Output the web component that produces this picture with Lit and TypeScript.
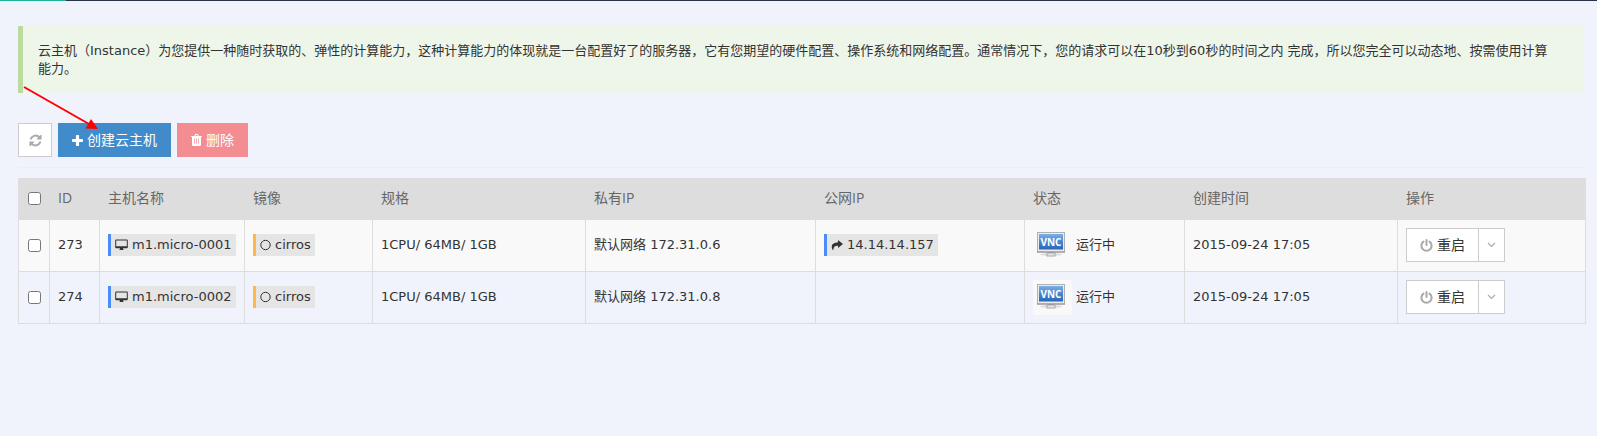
import { LitElement, html, css, svg, nothing } from "lit";
import { customElement, state } from "lit/decorators.js";

interface Instance {
  id: number;
  name: string;
  image: string;
  flavor: string;
  privateIp: string;
  publicIp: string;
  status: string;
  created: string;
}

const INSTANCES: Instance[] = [
  {
    id: 273,
    name: "m1.micro-0001",
    image: "cirros",
    flavor: "1CPU/ 64MB/ 1GB",
    privateIp: "默认网络 172.31.0.6",
    publicIp: "14.14.14.157",
    status: "运行中",
    created: "2015-09-24 17:05",
  },
  {
    id: 274,
    name: "m1.micro-0002",
    image: "cirros",
    flavor: "1CPU/ 64MB/ 1GB",
    privateIp: "默认网络 172.31.0.8",
    publicIp: "",
    status: "运行中",
    created: "2015-09-24 17:05",
  },
];

const icon = (cls: string, w: number, h: number, body: unknown) => html`
  <svg class="icon ${cls}" width=${w} height=${h} viewBox="0 0 ${w} ${h}" aria-hidden="true">${body}</svg>`;

const refreshIcon = icon("muted", 13, 13, svg`
  <path d="M.8 5.3A6 6 0 0 1 10.600 2.100L11.700 1Q12.500.5 12.600 1.300V5.100Q12.600 5.500 12.200 5.500H8.400Q7.600 5.300 8.100 4.600L9.200 3.500A4 4 0 0 0 2.900 5.100Q2.800 5.500 2.500 5.500H1Q.7 5.500.8 5.300Z"/>
  <path d="M12.200 7.700A6 6 0 0 1 2.400 10.900L1.300 12Q.5 12.500.4 11.700V7.900Q.4 7.500.8 7.500H4.600Q5.400 7.700 4.900 8.400L3.800 9.500A4 4 0 0 0 10.100 7.900Q10.200 7.500 10.500 7.500H12Q12.300 7.500 12.200 7.700Z"/>`);

const plusIcon = icon("", 11, 11, svg`
  <path d="M4.700 0h1.600q.8 0 .8.8v3.100h3.100q.8 0 .8.8v1.600q0 .8-.8.8H7.100v3.100q0 .8-.8.8H4.700q-.8 0-.8-.8V7.100H.8Q0 7.100 0 6.300V4.700q0-.8.8-.8h3.100V.8q0-.8.8-.8z"/>`);

const trashIcon = icon("", 11, 12, svg`
  <path fill-rule="evenodd" d="M3.300 2 3.900.6Q4.100 0 4.700 0h1.600q.6 0 .8.6L7.700 2H10.600q.4 0 .4.4v.6h-1v7.500q0 1.500-1.300 1.500H2.300Q1 12 1 10.500V3H0v-.6Q0 2 .4 2zM4.400 2h2.200L6.300 1H4.700zM3 4.500v5h.7v-5zM5.150 4.500v5h.7v-5zM7.300 4.500v5H8v-5z"/>`);

const desktopIcon = icon("", 13, 12, svg`
  <path fill-rule="evenodd" d="M1.200.5h10.600q1 0 1 1v6.800q0 1-1 1H8q0 .7.5 1.100.2.600-.3.600H4.800q-.5 0-.3-.6.5-.4.5-1.100H1.200q-1 0-1-1V1.500q0-1 1-1zM1.200 1.500v5.800h10.600V1.500z"/>`);

const circleIcon = icon("", 11, 12, svg`
  <circle cx="5.500" cy="6" r="4.700" fill="none" stroke="currentColor"/>`);

const shareIcon = icon("", 12, 12, svg`
  <path d="M7 1 12 5 7 9V6.800Q2.500 6.500 2.300 11H1.600Q0 7.500 1.200 5.600 2.800 3.300 7 3.200Z"/>`);

const powerIcon = icon("muted", 13, 13, svg`
  <path d="M3.500 2.600A5.100 5.100 0 1 0 9.500 2.600M6.500 1V6" fill="none" stroke="currentColor" stroke-width="2" stroke-linecap="round"/>`);

const chevronIcon = icon("muted", 9, 6, svg`
  <path d="M1 1 4.500 4.500 8 1" fill="none" stroke="currentColor" stroke-width="1.200"/>`);

const vncIcon = html`
  <svg class="vnc" width="39" height="35" viewBox="0 0 39 35" aria-hidden="true">
    <defs>
      <linearGradient id="screen" x1="0" y1="0" x2="0" y2="1">
        <stop offset="0" stop-color="#7ab0e6"/>
        <stop offset=".5" stop-color="#4a86d0"/>
        <stop offset="1" stop-color="#2a66b8"/>
      </linearGradient>
    </defs>
    <ellipse cx="18" cy="26.500" rx="11" ry="1.500" fill="#dcdcdc"/>
    <path d="M14.500 23h7v2h1v3.500h-9V25h1z" fill="#a8a8a8"/>
    <path d="M14.500 25.500h7v2h-7z" fill="#e6e6e6"/>
    <rect x="4.500" y="4.500" width="27" height="19.500" fill="#ececec" stroke="#b0b0b0"/>
    <path d="M4 23.500h28v1H4z" fill="#8d8d8d"/>
    <rect x="6" y="6" width="24" height="15.500" fill="url(#screen)"/>
    <text x="18" y="17.500" text-anchor="middle">VNC</text>
  </svg>`;

@customElement("app-root")
export class AppRoot extends LitElement {
  static styles = css`
    :host {
      display: block;
      min-height: 100vh;
      box-sizing: border-box;
      background: #f0f3fb;
      color: #333;
      font: 13px/18px "DejaVu Sans", "Noto Sans CJK SC", sans-serif;
    }
    .topbar {
      height: 1px;
      background: #2a3245;
    }
    .progress {
      width: 66px;
      height: 1px;
      background: #1caf9a;
    }
    main {
      padding: 25px 12px 0 18px;
    }
    .note {
      margin: 0 1px 30px 0;
      padding: 16px 35px 15px 15px;
      border-left: 5px solid #bcdc9f;
      background: #eef6ea;
    }
    .icon {
      flex: none;
      fill: currentColor;
    }
    .muted {
      color: #aaa;
    }
    .toolbar {
      position: relative;
      display: flex;
      gap: 6px;
      padding-bottom: 10px;
      border-bottom: 1px solid #eee;
      margin-bottom: 10px;
    }
    .arrow {
      position: absolute;
      left: 5px;
      top: -38px;
      pointer-events: none;
    }
    button {
      display: flex;
      align-items: center;
      justify-content: center;
      gap: 4px;
      box-sizing: border-box;
      height: 34px;
      margin: 0;
      padding: 0 13px;
      border: 1px solid #ccc;
      border-radius: 0;
      background: #fff;
      color: #333;
      font: 14px/20px "Open Sans", "Noto Sans CJK SC", sans-serif;
      white-space: nowrap;
    }
    .refresh {
      width: 34px;
      padding: 0;
    }
    .create {
      border-color: #428bca;
      background: #428bca;
      color: #fff;
    }
    .delete,
    .delete:disabled {
      border-color: #f38d92;
      background: #f38d92;
      color: #fff;
    }
    table {
      width: 100%;
      table-layout: fixed;
      border-collapse: collapse;
    }
    th,
    td {
      box-sizing: border-box;
      padding: 0 8px;
      border: 1px solid #ddd;
      text-align: left;
      vertical-align: middle;
    }
    th {
      height: 41px;
      padding-bottom: 2px;
      background: #ddd;
      color: #666;
      font: 14px/20px "Open Sans", "Noto Sans CJK SC", sans-serif;
    }
    td {
      height: 52px;
      padding-bottom: 1px;
    }
    tbody tr:nth-child(odd) {
      background: #f9f9f9;
    }
    .c-check { width: 31px; }
    .c-id { width: 50px; }
    .c-name { width: 145px; }
    .c-image { width: 128px; }
    .c-flavor { width: 213px; }
    .c-private { width: 230px; }
    .c-public { width: 209px; }
    .c-status { width: 160px; }
    .c-created { width: 213px; }
    .c-actions { width: 188px; }
    input {
      display: block;
      width: 13px;
      height: 13px;
      margin: 0 auto;
    }
    .tag {
      display: inline-flex;
      align-items: center;
      gap: 4px;
      height: 22px;
      padding: 0 4px;
      border-left: 3px solid #4b8df8;
      background: #e5e5e5;
      vertical-align: middle;
      white-space: nowrap;
    }
    .tag.image {
      border-left-color: #ffb848;
    }
    .status {
      display: flex;
      align-items: center;
      gap: 4px;
    }
    .vnc {
      flex: none;
      background: #f9f9f9;
    }
    .vnc text {
      fill: #fff;
      font: bold 10px "Open Sans", sans-serif;
    }
    .group {
      display: flex;
    }
    .more {
      width: 27px;
      margin-left: -1px;
      padding: 0;
    }
  `;

  @state() private selected = new Set<number>();

  private toggle(id: number) {
    const next = new Set(this.selected);
    next.has(id) ? next.delete(id) : next.add(id);
    this.selected = next;
  }

  private toggleAll() {
    this.selected =
      this.selected.size === INSTANCES.length ? new Set() : new Set(INSTANCES.map((i) => i.id));
  }

  private row(i: Instance) {
    return html`
      <tr>
        <td>
          <input type="checkbox" aria-label="选择 ${i.name}"
            .checked=${this.selected.has(i.id)} @change=${() => this.toggle(i.id)} />
        </td>
        <td>${i.id}</td>
        <td><span class="tag">${desktopIcon}<span>${i.name}</span></span></td>
        <td><span class="tag image">${circleIcon}<span>${i.image}</span></span></td>
        <td>${i.flavor}</td>
        <td>${i.privateIp}</td>
        <td>${i.publicIp ? html`<span class="tag">${shareIcon}<span>${i.publicIp}</span></span>` : nothing}</td>
        <td><div class="status">${vncIcon}<span>${i.status}</span></div></td>
        <td>${i.created}</td>
        <td>
          <div class="group">
            <button type="button">${powerIcon}<span>重启</span></button>
            <button type="button" class="more" aria-label="更多操作">${chevronIcon}</button>
          </div>
        </td>
      </tr>`;
  }

  render() {
    return html`
      <div class="topbar"><div class="progress"></div></div>
      <main>
        <p class="note">云主机（Instance）为您提供一种随时获取的、弹性的计算能力，这种计算能力的体现就是一台配置好了的服务器，它有您期望的硬件配置、操作系统和网络配置。通常情况下，您的请求可以在10秒到60秒的时间之内 完成，所以您完全可以动态地、按需使用计算能力。</p>
        <div class="toolbar">
          <button type="button" class="refresh" aria-label="刷新">${refreshIcon}</button>
          <button type="button" class="create">${plusIcon}<span>创建云主机</span></button>
          <button type="button" class="delete" ?disabled=${this.selected.size === 0}>${trashIcon}<span>删除</span></button>
          <svg class="arrow" width="76" height="46" viewBox="0 0 76 46" aria-hidden="true">
            <path d="M1 2 66 39" stroke="#f00" stroke-width="2" fill="none"/>
            <path d="M75 44 62.500 43.500 68 34Z" fill="#f00"/>
          </svg>
        </div>
        <table>
          <colgroup>
            <col class="c-check" /><col class="c-id" /><col class="c-name" /><col class="c-image" />
            <col class="c-flavor" /><col class="c-private" /><col class="c-public" />
            <col class="c-status" /><col class="c-created" /><col class="c-actions" />
          </colgroup>
          <thead>
            <tr>
              <th>
                <input type="checkbox" aria-label="全选"
                  .checked=${this.selected.size === INSTANCES.length} @change=${this.toggleAll} />
              </th>
              <th>ID</th>
              <th>主机名称</th>
              <th>镜像</th>
              <th>规格</th>
              <th>私有IP</th>
              <th>公网IP</th>
              <th>状态</th>
              <th>创建时间</th>
              <th>操作</th>
            </tr>
          </thead>
          <tbody>${INSTANCES.map((i) => this.row(i))}</tbody>
        </table>
      </main>`;
  }
}
